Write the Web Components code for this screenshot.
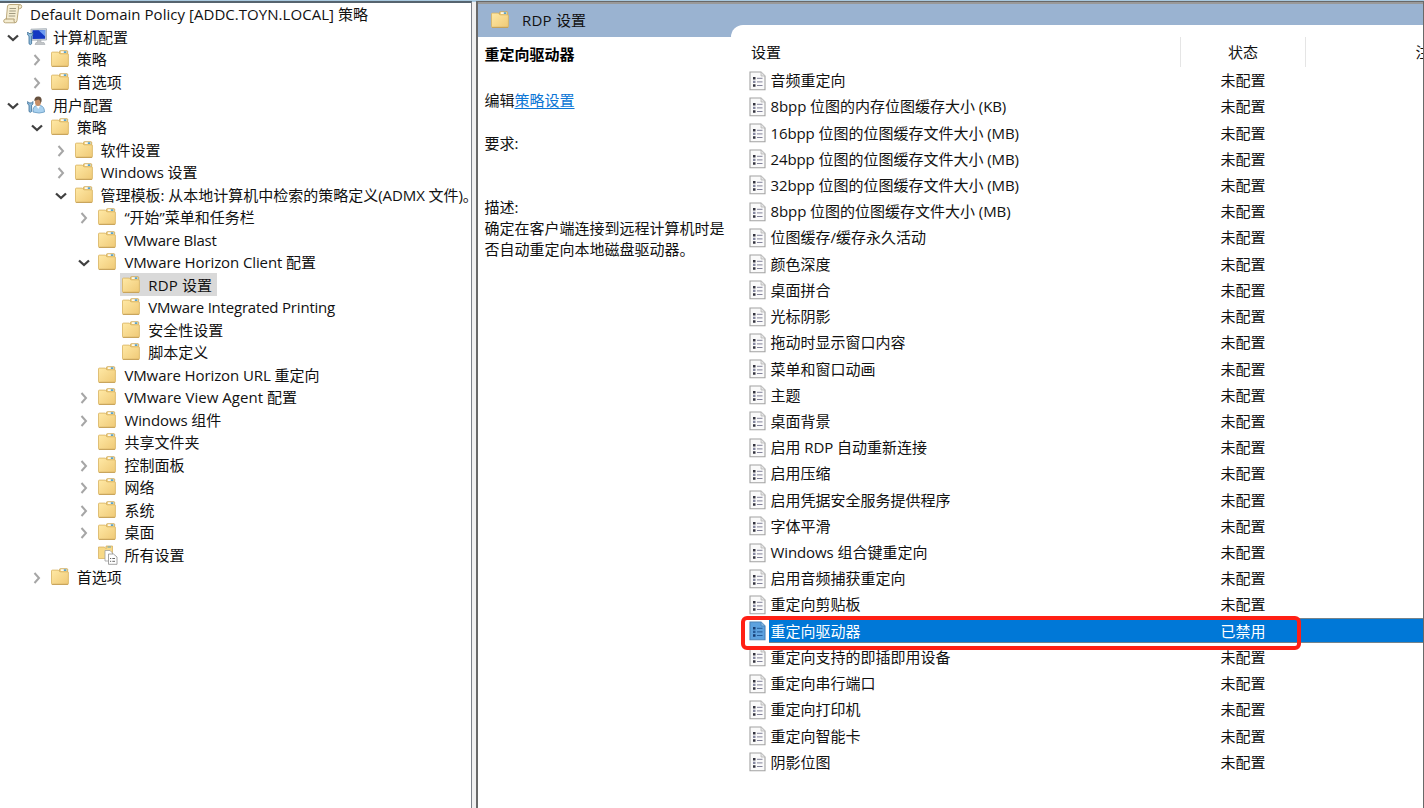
<!DOCTYPE html>
<html lang="zh-CN">
<head>
<meta charset="utf-8">
<title>RDP 设置</title>
<style>
    html, body {
        margin: 0;
        width: 1424px;
        height: 808px;
        overflow: hidden;
        background: #fff;
        color: #111;
        font: 15px/22px "Noto Sans CJK SC", sans-serif;
    }
</style>
</head>
<body>
<policy-editor></policy-editor>

<script>
// Icons shared by the tree and the list
const ICONS = {
    folder: `<svg width="18" height="18" viewBox="0 0 18 18">
        <defs><linearGradient id="f" x1="0" y1="0" x2="1" y2="1"><stop offset="0" stop-color="#ffe9a6"/><stop offset="1" stop-color="#efc976"/></linearGradient></defs>
        <path d="M8.500 4V1.500q0-.8.8-.8h6.600q.8 0 .8.800V5z" fill="#f4d687" stroke="#caa455" stroke-width=".8"/>
        <path d="M10 2.100h5.500" stroke="#fff" stroke-width="1.500"/><path d="M12.800 2.100h2.500" stroke="#3d94c4" stroke-width="1.500"/>
        <path d="M.5 3q0-.9.9-.9h5.800l1.800 1.700h7.500q.9 0 .9.900v10.900q0 .9-.9.900H1.400q-.9 0-.9-.9z" fill="url(#f)" stroke="#d8b25f" stroke-width=".8"/>
        <path d="M1 16.300h16" stroke="#bd9851" stroke-width=".8"/></svg>`,
    scroll: `<svg width="20" height="20" viewBox="0 0 20 20">
        <path d="M4.500 2q.6-1.500 2.200-1.500h10q2 0 2 2t-2 2.200h-1.200L14 16.500q-.3 2.300-2.200 2.300H2.500Q.6 18.800.7 17t2-2h.6z" fill="#f5edd2" stroke="#b4a071" stroke-width=".9"/>
        <path d="M15.500 4.700q-.8-2.800 1.200-4.100M2.700 15h8.500q-.8 2.200.6 3.700" fill="none" stroke="#a8946a" stroke-width=".9"/>
        <path d="M6.500 4.500h6.500M6.300 7h6.500M6 9.500h6.500M5.700 12h6.500" stroke="#a09a80" stroke-width="1"/></svg>`,
    computer: `<svg width="20" height="18" viewBox="0 0 20 18">
        <path d="M4 1.200 19.500.7v11.300L4 12.200z" fill="#d7dce0" stroke="#9aa4ad" stroke-width=".8"/>
        <path d="M5.500 2.300 18.200 2v8.800L5.500 11z" fill="#1438c2"/><path d="M11.500 2.200l6.700-.2v6.500z" fill="#6f9cf0"/>
        <path d="M10.500 12.200h3.500v2.300h3l1 2H8l1-2h1.500z" fill="#c2c5c7" stroke="#999fa4" stroke-width=".5"/>
        <path d="M.7 4v3L2 8.200v7.600q1.300 1.600 2.600 0V8.200L5.900 7V4L4.600 5.500H2z" fill="#8fbbdc" stroke="#396c96" stroke-width=".8"/></svg>`,
    user: `<svg width="18" height="18" viewBox="0 0 18 18">
        <path d="M6 16q-.5-6 4-6.500h3.500q4 1 4 6.500-5 2.200-11.500 0z" fill="#a9d1ef" stroke="#568eb9" stroke-width=".7"/>
        <path d="M9 9.500l2.300 3.500 2-3.500z" fill="#fff"/>
        <ellipse cx="11" cy="6" rx="3" ry="4" fill="#c68e65"/><path d="M7.300 5q0-4.600 4-4.500 3.800.2 3.300 4.700l-1 2Q13.500 4 11.500 3.500z" fill="#65503e"/>
        <path d="M.7 5.500v2.600L2 9.200v6.300q1.300 1.600 2.600 0V9.200l1.300-1.100V5.500L4.600 6.900H2z" fill="#8fbbdc" stroke="#396c96" stroke-width=".8"/></svg>`,
    all: `<svg width="20" height="20" viewBox="0 0 20 20">
        <path d="M.5 2h6l1.500 1.700V1h6.500v12.500H.5z" fill="#f7d987" stroke="#d3ab56" stroke-width=".7"/><path d="M9.500 2H13" stroke="#5ca4c4"/>
        <path d="M7 5.500h5l2.500 2.500v8H7z" fill="#fff" stroke="#a0a0a0" stroke-width=".8"/>
        <path d="M10.500 9h5l3.500 3v7.300h-8.500z" fill="#fff" stroke="#8c8c8c" stroke-width=".8"/>
        <path d="M12 13.500h1.200M12 16.300h1.200M14.300 13.500H17M14.300 16.300H17" stroke="#666"/></svg>`,
    setting: `<svg width="17" height="20" viewBox="0 0 17 20">
        <path d="M1 1h11l4 4v13.700H1z" fill="var(--paper, #fafafa)" stroke="var(--edge, #a2a2a2)" stroke-width="1.100"/>
        <path d="M12 1v4h4" fill="var(--fold, #e4e4e4)" stroke="var(--edge, #b5b5b5)" stroke-width=".8"/>
        <path d="M4 6h2.500v2.500H4zM4 13.200h2.500v2.500H4z" fill="var(--ink, #353540)"/><path d="M4 9.700h2.500v2.300H4z" fill="var(--line, #8588a0)"/>
        <path d="M8 7.300h5.500M8 10.900h5.500M8 14.500h5.500" stroke="var(--line, #82829a)" stroke-width="1"/></svg>`,
    open: `<svg width="14" height="10" viewBox="0 0 14 10"><path d="M2 2.500l5 4.500 5-4.500" fill="none" stroke="#404040" stroke-width="2.300"/></svg>`,
    closed: `<svg width="10" height="14" viewBox="0 0 10 14"><path d="M2.500 2l4.500 5-4.500 5" fill="none" stroke="#a6a6a6" stroke-width="2"/></svg>`
};

// Label that sets Latin runs in their own face
class MixedText extends HTMLElement {
    constructor() {
        super();
        this.attachShadow({ mode: 'open' });
    }

    connectedCallback() {
        const text = this.getAttribute('text');
        const html = text.replace(/[\x20-\x7e“”]+/g, run => `<span>${run}</span>`);
        this.shadowRoot.innerHTML = `<style>
                :host { display: block; white-space: pre; }
                span { font-family: "Open Sans", sans-serif; letter-spacing: var(--track, -0.1px); }
            </style>${html}`;
    }
}
customElements.define('mixed-text', MixedText);

class TreeRow extends HTMLElement {
    constructor() {
        super();
        this.attachShadow({ mode: 'open' });
    }

    connectedCallback() {
        const level = Number(this.getAttribute('level'));
        const icon = this.getAttribute('icon') || 'folder';
        const state = this.getAttribute('state');
        this.shadowRoot.innerHTML = `
            <style>
                :host { display: flex; align-items: center; height: 22.52px; box-sizing: border-box; padding-left: ${level ? 5 + (level - 1) * 23.8 : 0}px; }
                .arrow { flex: none; width: ${level ? 16 : 0}px; margin-right: ${level ? 4 : 1}px; display: flex; justify-content: center; padding-top: 2px; }
                .item { display: flex; align-items: center; height: 22.52px; padding: 0 5px 0 2px; }
                .icon { flex: none; width: ${level ? 26 : 27}px; display: flex; }
                :host([selected]) .item { background: #d9d9d9; }
                svg { display: block; }
            </style>
            <div class="arrow">${state ? ICONS[state] : ''}</div>
            <div class="item"><div class="icon">${ICONS[icon]}</div><mixed-text text="${this.getAttribute('text')}"></mixed-text></div>`;
    }
}
customElements.define('tree-row', TreeRow);

class PolicyTree extends HTMLElement {
    constructor() {
        super();
        this.attachShadow({ mode: 'open' });
        // level, text, arrow state, icon, tracking
        const rows = [
            [0, 'Default Domain Policy [ADDC.TOYN.LOCAL] 策略', '', 'scroll', 0.04],
            [1, '计算机配置', 'open', 'computer'],
            [2, '策略', 'closed'],
            [2, '首选项', 'closed'],
            [1, '用户配置', 'open', 'user'],
            [2, '策略', 'open'],
            [3, '软件设置', 'closed'],
            [3, 'Windows 设置', 'closed'],
            [3, '管理模板: 从本地计算机中检索的策略定义(ADMX 文件)。', 'open'],
            [4, '“开始”菜单和任务栏', 'closed'],
            [4, 'VMware Blast', '', 'folder', -0.25],
            [4, 'VMware Horizon Client 配置', 'open'],
            [5, 'RDP 设置', '', 'folder', 0.2],
            [5, 'VMware Integrated Printing', '', 'folder', -0.2],
            [5, '安全性设置', ''],
            [5, '脚本定义', ''],
            [4, 'VMware Horizon URL 重定向', ''],
            [4, 'VMware View Agent 配置', 'closed', 'folder', 0.03],
            [4, 'Windows 组件', 'closed'],
            [4, '共享文件夹', ''],
            [4, '控制面板', 'closed'],
            [4, '网络', 'closed'],
            [4, '系统', 'closed'],
            [4, '桌面', 'closed'],
            [4, '所有设置', '', 'all'],
            [2, '首选项', 'closed']
        ];
        this.shadowRoot.innerHTML = `
            <style>
                :host { display: block; box-sizing: border-box; padding-top: 0.2px; overflow: hidden; border-top: 2px solid #56646f; border-right: 1px solid #7d828a; }
            </style>
            ${rows.map(([level, text, state, icon, track]) =>
                `<tree-row level="${level}" text="${text}" state="${state}" icon="${icon || 'folder'}"${track ? ` style="--track: ${track}px"` : ''}${text === 'RDP 设置' ? ' selected' : ''}></tree-row>`).join('')}`;
    }
}
customElements.define('policy-tree', PolicyTree);

class PolicyDetails extends HTMLElement {
    constructor() {
        super();
        this.attachShadow({ mode: 'open' });
        this.shadowRoot.innerHTML = `
            <style>
                :host { display: block; box-sizing: border-box; padding: 6px 0 0 6.5px; line-height: 21.5px; }
                h1 { margin: 0; font-size: 15px; font-weight: bold; color: #000; }
                p { margin: 0; white-space: nowrap; }
                .edit { margin-top: 24.5px; }
                .req { margin-top: 21px; }
                .desc { margin-top: 41.5px; }
                .text { line-height: 21px; margin-top: -1px; }
                a { color: #0c76d5; text-decoration: underline; text-underline-offset: 2px; }
            </style>
            <h1>重定向驱动器</h1>
            <p class="edit">编辑<a>策略设置</a></p>
            <p class="req"><mixed-text text="要求:"></mixed-text></p>
            <p class="desc"><mixed-text text="描述:"></mixed-text></p>
            <p class="text">确定在客户端连接到远程计算机时是<br>否自动重定向本地磁盘驱动器。</p>`;
    }
}
customElements.define('policy-details', PolicyDetails);

class SettingRow extends HTMLElement {
    constructor() {
        super();
        this.attachShadow({ mode: 'open' });
    }

    connectedCallback() {
        this.shadowRoot.innerHTML = `
            <style>
                :host { display: flex; align-items: center; height: 26.23px; padding-left: 18px; }
                .icon { flex: none; width: 20px; padding-top: 1px; }
                .cells { flex: 1; display: flex; align-items: center; height: 25px; box-sizing: border-box; padding-left: 1.5px; }
                .name { width: 410px; }
                .status { width: 125px; text-align: center; }
                svg { display: block; }
                :host([selected]) { --paper: #5da2df; --fold: #86b9e4; --ink: #173d72; --line: #245a98; --edge: #4a83b8; color: #fff; }
                :host([selected]) .cells { background: #0078d7; border: solid #74838c; border-width: 1px 0; }
            </style>
            <div class="icon">${ICONS.setting}</div>
            <div class="cells"><mixed-text class="name" text="${this.getAttribute('text')}"></mixed-text><div class="status">${this.getAttribute('status')}</div></div>`;
    }
}
customElements.define('setting-row', SettingRow);

class SettingList extends HTMLElement {
    constructor() {
        super();
        this.attachShadow({ mode: 'open' });
        const names = [
            '音频重定向',
            '8bpp 位图的内存位图缓存大小 (KB)',
            '16bpp 位图的位图缓存文件大小 (MB)',
            '24bpp 位图的位图缓存文件大小 (MB)',
            '32bpp 位图的位图缓存文件大小 (MB)',
            '8bpp 位图的位图缓存文件大小 (MB)',
            '位图缓存/缓存永久活动',
            '颜色深度',
            '桌面拼合',
            '光标阴影',
            '拖动时显示窗口内容',
            '菜单和窗口动画',
            '主题',
            '桌面背景',
            '启用 RDP 自动重新连接',
            '启用压缩',
            '启用凭据安全服务提供程序',
            '字体平滑',
            'Windows 组合键重定向',
            '启用音频捕获重定向',
            '重定向剪贴板',
            '重定向驱动器',
            '重定向支持的即插即用设备',
            '重定向串行端口',
            '重定向打印机',
            '重定向智能卡',
            '阴影位图'
        ];
        const selected = '重定向驱动器';
        this.shadowRoot.innerHTML = `
            <style>
                :host { display: block; position: relative; box-sizing: border-box; background: #fff; border-top-left-radius: 12px; padding-top: 12px; overflow: hidden; }
                .head { display: flex; height: 30px; line-height: 30px; padding-left: 20px; }
                .head div { box-sizing: border-box; border-right: 1px solid #e5e5e5; white-space: nowrap; flex: none; }
                .head .name { width: 430px; }
                .head .status { width: 125px; text-align: center; }
                .head .note { border: 0; padding-left: 109.5px; }
                .mark { position: absolute; left: 10px; top: 591px; width: 560px; height: 34px; box-sizing: border-box; border: 4px solid #ff2015; border-radius: 6px; }
            </style>
            <div class="head"><div class="name">设置</div><div class="status">状态</div><div class="note">注</div></div>
            ${names.map(name => `<setting-row text="${name}" status="${name === selected ? '已禁用' : '未配置'}"${name === selected ? ' selected' : ''}></setting-row>`).join('')}
            <div class="mark"></div>`;
    }
}
customElements.define('setting-list', SettingList);

class PolicyEditor extends HTMLElement {
    constructor() {
        super();
        this.attachShadow({ mode: 'open' });
        this.shadowRoot.innerHTML = `
            <style>
                :host { display: flex; width: 1424px; height: 808px; box-sizing: border-box; border-top: 1px solid #a9c9df; background: #fff; }
                policy-tree { width: 472px; flex: none; }
                .splitter { width: 4px; flex: none; background: #f0f0f0; border-top: 1px solid #a9c9df; box-sizing: border-box; }
                .right { flex: 1; min-width: 0; display: flex; box-sizing: border-box; border: solid #696969; border-width: 1px 1px 0 2px;
                    background: linear-gradient(#999 0 2px, #9ab3d1 2px 35px, #fff 35px); }
                .left { width: 253px; flex: none; }
                .title { display: flex; align-items: center; height: 35px; box-sizing: border-box; padding: 1px 0 0 13px; --track: 0.2px; }
                .title svg { display: block; margin-right: 13px; }
                policy-details { height: 772px; }
                setting-list { flex: 1; min-width: 0; margin-top: 23px; }
            </style>
            <policy-tree></policy-tree>
            <div class="splitter"></div>
            <div class="right">
                <div class="left">
                    <div class="title">${ICONS.folder}<mixed-text text="RDP 设置"></mixed-text></div>
                    <policy-details></policy-details>
                </div>
                <setting-list></setting-list>
            </div>`;
    }
}
customElements.define('policy-editor', PolicyEditor);
</script>
</body>
</html>
